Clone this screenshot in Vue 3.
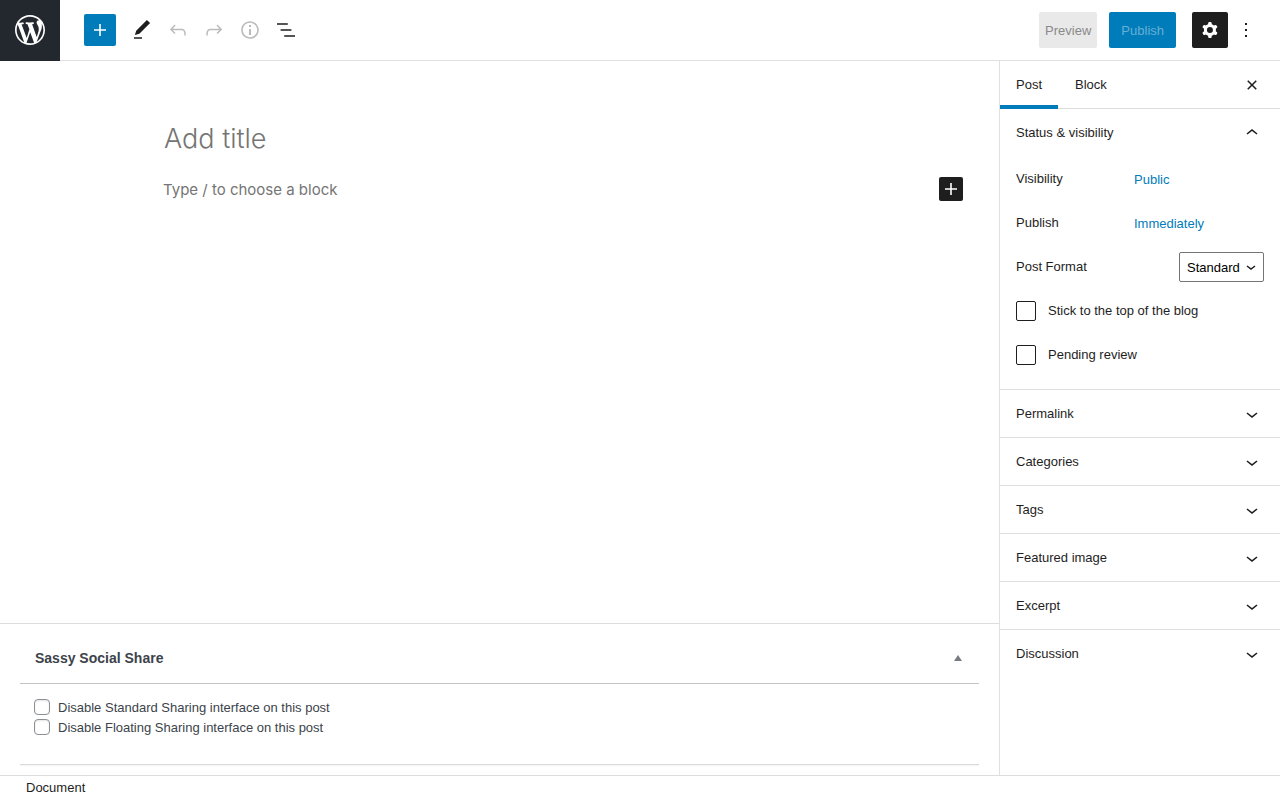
<script setup>
import { ref } from 'vue'

const icons = {
  plus: 'M18 11.2h-5.2V6h-1.6v5.2H6v1.6h5.2V18h1.6v-5.2H18z',
  edit: 'M20.1 5.1L16.9 2 6.2 12.7l-1.3 4.4 4.5-1.3L20.1 5.1zM4 20.8h8v-1.5H4v1.5z',
  undo: 'M18.3 11.7c-.6-.6-1.4-.9-2.3-.9H6.7l2.9-3.3-1.1-1-4.5 5L8.5 16l1-1-2.7-2.7H16c.5 0 .9.2 1.3.5 1 1 1 3.4 1 4.5v.3h1.5v-.2c0-1.5 0-4.3-1.5-5.7z',
  redo: 'M15.6 6.5l-1.1 1 2.9 3.3H8c-.9 0-1.7.3-2.3.9-1.4 1.5-1.4 4.2-1.4 5.6v.2h1.5v-.3c0-1.1 0-3.5 1-4.5.3-.3.7-.5 1.3-.5h9.2L14.5 15l1.1 1.1 4.6-4.6-4.6-5z',
  info: 'M12 3.2c-4.8 0-8.8 3.9-8.8 8.8 0 4.8 3.9 8.8 8.8 8.8 4.8 0 8.8-3.9 8.8-8.8 0-4.8-4-8.8-8.8-8.8zm0 16c-4 0-7.2-3.3-7.2-7.2C4.8 8 8 4.8 12 4.8s7.2 3.3 7.2 7.2c0 4-3.2 7.2-7.2 7.2zM11 17h2v-6h-2v6zm0-8h2V7h-2v2z',
  list: 'M13.8 5.2H3v1.5h10.8V5.2zm-3.6 12v1.5H21v-1.5H10.2zm7.2-6H6.6v1.5h10.8v-1.5z',
  cog: 'M10.289 4.836A1 1 0 0111.275 4h1.306a1 1 0 01.987.836l.244 1.466c.787.26 1.503.679 2.108 1.218l1.393-.522a1 1 0 011.216.437l.653 1.13a1 1 0 01-.23 1.273l-1.148.944a6.025 6.025 0 010 2.435l1.149.946a1 1 0 01.23 1.272l-.653 1.13a1 1 0 01-1.216.437l-1.394-.522c-.605.54-1.32.958-2.108 1.218l-.244 1.466a1 1 0 01-.987.836h-1.306a1 1 0 01-.986-.836l-.244-1.466a5.995 5.995 0 01-2.108-1.218l-1.394.522a1 1 0 01-1.217-.436l-.653-1.131a1 1 0 01.23-1.272l1.149-.946a6.026 6.026 0 010-2.435l-1.148-.944a1 1 0 01-.23-1.272l.653-1.131a1 1 0 011.217-.437l1.393.522a5.994 5.994 0 012.108-1.218l.244-1.466zM14.929 12a3 3 0 11-6 0 3 3 0 016 0z',
  more: 'M13 19h-2v-2h2v2zm0-6h-2v-2h2v2zm0-6h-2V5h2v2z',
  close: 'M12 13.06l3.712 3.713 1.061-1.06L13.061 12l3.712-3.712-1.06-1.06L12 10.938 8.288 7.227l-1.061 1.06L10.939 12l-3.712 3.712 1.06 1.061L12 13.061z',
  up: 'M6.5 12.4L12 8l5.5 4.4-.9 1.2L12 10l-4.5 3.6-1-1.2z',
  down: 'M17.5 11.6L12 16l-5.5-4.4.9-1.2L12 14l4.5-3.6 1 1.2z'
}

const tools = [
  { label: 'Tools', icon: 'edit', disabled: false },
  { label: 'Undo', icon: 'undo', disabled: true },
  { label: 'Redo', icon: 'redo', disabled: true },
  { label: 'Details', icon: 'info', disabled: true },
  { label: 'List view', icon: 'list', disabled: false }
]
const panels = ['Permalink', 'Categories', 'Tags', 'Featured image', 'Excerpt', 'Discussion']

const title = ref('')
const block = ref('')
const format = ref('Standard')
const sticky = ref(false)
const pending = ref(false)
const noStandard = ref(false)
const noFloating = ref(false)
</script>

<template>
  <div class="editor">
    <header class="topbar">
      <a class="logo" href="#" aria-label="View posts">
        <svg width="36" height="36" viewBox="-2 -2 24 24"><path d="M20 10c0-5.51-4.49-10-10-10C4.48 0 0 4.49 0 10c0 5.52 4.48 10 10 10 5.51 0 10-4.48 10-10zM7.78 15.37L4.37 6.22c.55-.02 1.17-.08 1.17-.08.5-.06.44-1.13-.06-1.11 0 0-1.45.11-2.37.11-.18 0-.37 0-.58-.01C4.12 2.69 6.87 1.11 10 1.11c2.33 0 4.45.87 6.05 2.34-.68-.11-1.65.39-1.65 1.58 0 .74.45 1.36.9 2.1.35.61.55 1.36.55 2.46 0 1.49-1.4 5-1.4 5l-3.03-8.37c.54-.02.82-.17.82-.17.5-.05.44-1.25-.06-1.22 0 0-1.44.12-2.38.12-.87 0-2.33-.12-2.33-.12-.5-.03-.56 1.2-.06 1.22l.92.08 1.26 3.41zM17.41 10c.24-.64.74-1.87.43-4.25.7 1.29 1.05 2.71 1.05 4.25 0 3.29-1.73 6.24-4.4 7.78.97-2.59 1.94-5.2 2.92-7.78zM6.1 18.09C3.12 16.65 1.11 13.53 1.11 10c0-1.3.23-2.48.72-3.59C3.25 10.3 4.67 14.2 6.1 18.09zm4.03-6.63l2.58 6.98c-.86.29-1.76.45-2.71.45-.79 0-1.57-.11-2.29-.33.81-2.38 1.62-4.74 2.42-7.1z" /></svg>
      </a>
      <div class="bar">
        <button class="inserter" type="button" aria-label="Add block">
          <svg width="24" height="24" viewBox="0 0 24 24"><path :d="icons.plus" /></svg>
        </button>
        <div class="tools">
          <button v-for="t in tools" :key="t.label" class="tool" type="button" :aria-label="t.label" :disabled="t.disabled">
            <svg width="24" height="24" viewBox="0 0 24 24"><path :d="icons[t.icon]" /></svg>
          </button>
        </div>
        <div class="actions">
          <button class="preview" type="button" disabled>Preview</button>
          <button class="publish" type="button" disabled>Publish</button>
          <button class="settings" type="button" aria-label="Settings">
            <svg width="24" height="24" viewBox="0 0 24 24"><path fill-rule="evenodd" :d="icons.cog" /></svg>
          </button>
          <button class="tool" type="button" aria-label="Options">
            <svg width="24" height="24" viewBox="0 0 24 24"><path :d="icons.more" /></svg>
          </button>
        </div>
      </div>
    </header>

    <div class="body">
      <main class="content">
        <section class="canvas">
          <input v-model="title" class="title" type="text" placeholder="Add title" aria-label="Add title">
          <div class="block">
            <input v-model="block" class="paragraph" type="text" placeholder="Type / to choose a block" aria-label="Block text">
            <button class="add" type="button" aria-label="Add block">
              <svg width="24" height="24" viewBox="0 0 24 24"><path :d="icons.plus" /></svg>
            </button>
          </div>
        </section>
        <section class="metaboxes">
          <div class="metabox">
            <div class="metahead">
              <h2>Sassy Social Share</h2>
              <button class="fold" type="button" aria-label="Toggle panel">
                <svg width="8" height="6" viewBox="0 0 8 6"><path d="M4 0l4 6H0z" /></svg>
              </button>
            </div>
            <div class="metabody">
              <label><input v-model="noStandard" type="checkbox"><span>Disable Standard Sharing interface on this post</span></label>
              <label><input v-model="noFloating" type="checkbox"><span>Disable Floating Sharing interface on this post</span></label>
            </div>
          </div>
        </section>
      </main>

      <aside class="sidebar">
        <div class="tabs">
          <button class="tab active" type="button">Post</button>
          <button class="tab" type="button">Block</button>
          <button class="close" type="button" aria-label="Close settings">
            <svg width="24" height="24" viewBox="0 0 24 24"><path :d="icons.close" /></svg>
          </button>
        </div>
        <section class="panel open">
          <button class="toggle" type="button">
            <span>Status &amp; visibility</span>
            <svg width="24" height="24" viewBox="0 0 24 24"><path :d="icons.up" /></svg>
          </button>
          <div class="rows">
            <div class="row"><span class="name">Visibility</span><button class="value" type="button">Public</button></div>
            <div class="row"><span class="name">Publish</span><button class="value" type="button">Immediately</button></div>
            <div class="row format">
              <label for="format">Post Format</label>
              <span class="select">
                <select id="format" v-model="format">
                  <option>Standard</option>
                </select>
                <svg width="10" height="6" viewBox="0 0 10 6"><path d="M1 1l4 3L9 1" /></svg>
              </span>
            </div>
            <label class="row check"><input v-model="sticky" type="checkbox"><span>Stick to the top of the blog</span></label>
            <label class="row check"><input v-model="pending" type="checkbox"><span>Pending review</span></label>
          </div>
        </section>
        <section v-for="p in panels" :key="p" class="panel">
          <button class="toggle" type="button">
            <span>{{ p }}</span>
            <svg width="24" height="24" viewBox="0 0 24 24"><path :d="icons.down" /></svg>
          </button>
        </section>
      </aside>
    </div>

    <footer class="footer"><button type="button">Document</button></footer>
  </div>
</template>

<style>
body {
  margin: 0;
  background: #fff;
}
</style>

<style scoped>
* {
  box-sizing: border-box;
}
.editor {
  display: flex;
  flex-direction: column;
  min-height: 100vh;
  font: 13px/18px "Liberation Sans", Arial, sans-serif;
  color: #1e1e1e;
}
button {
  display: flex;
  align-items: center;
  justify-content: center;
  margin: 0;
  padding: 0;
  border: 0;
  background: none;
  color: inherit;
  font: inherit;
  cursor: pointer;
}
svg {
  display: block;
  flex: none;
  fill: currentColor;
}
input,
select {
  margin: 0;
  font: inherit;
}

.topbar {
  display: flex;
}
.logo {
  display: flex;
  align-items: center;
  justify-content: center;
  width: 60px;
  height: 61px;
  padding-bottom: 1px;
  background: #23282e;
  color: #fff;
}
.bar {
  display: flex;
  flex: 1;
  align-items: center;
  padding: 0 16px 0 24px;
  border-bottom: 1px solid #e0e0e0;
}
.inserter {
  width: 32px;
  height: 32px;
  border-radius: 2px;
  background: #007cba;
  color: #fff;
}
.tools {
  display: flex;
  margin-left: 8px;
}
.tool {
  width: 36px;
  height: 36px;
}
.tool:disabled {
  color: #bbb;
}
.actions {
  display: flex;
  margin-left: auto;
}
.preview,
.publish {
  height: 36px;
  margin-right: 12px;
  padding: 2px 6px 0;
  border-radius: 2px;
  background: #e9e9e9;
  color: #8a8a8a;
}
.publish {
  margin-right: 16px;
  padding: 2px 12px 0;
  background: #007cba;
  color: #66b0d6;
}
.settings {
  width: 36px;
  height: 36px;
  border-radius: 2px;
  background: #1e1e1e;
  color: #fff;
}

.body {
  display: flex;
  flex: 1;
}
.content {
  display: flex;
  flex: 1;
  flex-direction: column;
  min-width: 0;
}
.canvas {
  flex: 1;
  padding: 55px 36px 0 163px;
}
.title,
.paragraph {
  display: block;
  width: 100%;
  padding: 0;
  border: 0;
  outline: 0;
  background: none;
  font-family: Inter, "Liberation Sans", sans-serif;
  color: #1e1e1e;
}
.title {
  height: 44px;
  padding-left: 1px;
  font-size: 27px;
  font-weight: 300;
}
.title::placeholder,
.paragraph::placeholder {
  color: #757575;
  opacity: 1;
}
.block {
  display: flex;
  align-items: center;
  margin-top: 17px;
}
.paragraph {
  flex: 1;
  height: 24px;
  font-size: 15px;
}
.add {
  width: 24px;
  height: 24px;
  border-radius: 2px;
  background: #1e1e1e;
  color: #fff;
}
.metaboxes {
  padding: 10px 20px;
  border-top: 1px solid #ddd;
}
.metabox {
  border-bottom: 1px solid #d9dadb;
  box-shadow: 0 1px 1px rgba(0, 0, 0, 0.04);
  color: #3c434a;
}
.metahead {
  display: flex;
  align-items: center;
  justify-content: space-between;
  height: 50px;
  padding: 0 3px 2px 15px;
  border-bottom: 1px solid #c3c4c7;
}
.metahead h2 {
  margin: 0;
  font-size: 14px;
  line-height: 20px;
}
.fold {
  width: 36px;
  height: 36px;
  color: #787c82;
}
.metabody {
  padding: 13px 14px 27px;
}
.metabody label {
  display: flex;
  align-items: center;
  width: fit-content;
  height: 20px;
  gap: 8px;
}
.metabody span {
  padding-top: 2px;
}
input[type="checkbox"] {
  appearance: none;
  flex: none;
  width: 16px;
  height: 16px;
  border: 1px solid #8c8f94;
  border-radius: 4px;
  background: #fff;
}
.metabody input[type="checkbox"] {
  box-shadow: inset 0 1px 2px rgba(0, 0, 0, 0.1);
}
input[type="checkbox"]:checked {
  background: #007cba;
}

.sidebar {
  width: 281px;
  border-left: 1px solid #e0e0e0;
}
.tabs {
  display: flex;
  gap: 1px;
  height: 48px;
  padding-right: 16px;
  border-bottom: 1px solid #ddd;
}
.tab {
  height: 48px;
  padding: 0 16px;
}
.tab.active {
  box-shadow: inset 0 -4px #007cba;
}
.close {
  width: 24px;
  height: 48px;
  margin-left: auto;
}
.panel + .panel {
  border-top: 1px solid #e0e0e0;
}
.toggle {
  justify-content: space-between;
  width: 100%;
  height: 47px;
  padding: 0 16px;
}
.open .toggle {
  height: 48px;
}
.rows {
  padding: 0 16px 12px;
}
.row {
  display: flex;
  align-items: center;
  height: 44px;
}
.name {
  width: 118px;
}
.value {
  padding-top: 2px;
  color: #007cba;
}
.format {
  justify-content: space-between;
}
.select {
  position: relative;
}
.select select {
  display: block;
  appearance: none;
  width: 85px;
  height: 30px;
  padding: 2px 7px 0;
  border: 1px solid #757575;
  border-radius: 2px;
  background: #fff;
  color: #000;
}
.select svg {
  position: absolute;
  right: 8px;
  top: 13px;
  fill: none;
  stroke: #1e1e1e;
  stroke-width: 1.5;
  pointer-events: none;
}
.check {
  gap: 12px;
}
.check input[type="checkbox"] {
  width: 20px;
  height: 20px;
  border-color: #1e1e1e;
  border-radius: 2px;
}
.footer {
  display: flex;
  height: 25px;
  padding: 0 26px;
  border-top: 1px solid #ddd;
}
</style>
